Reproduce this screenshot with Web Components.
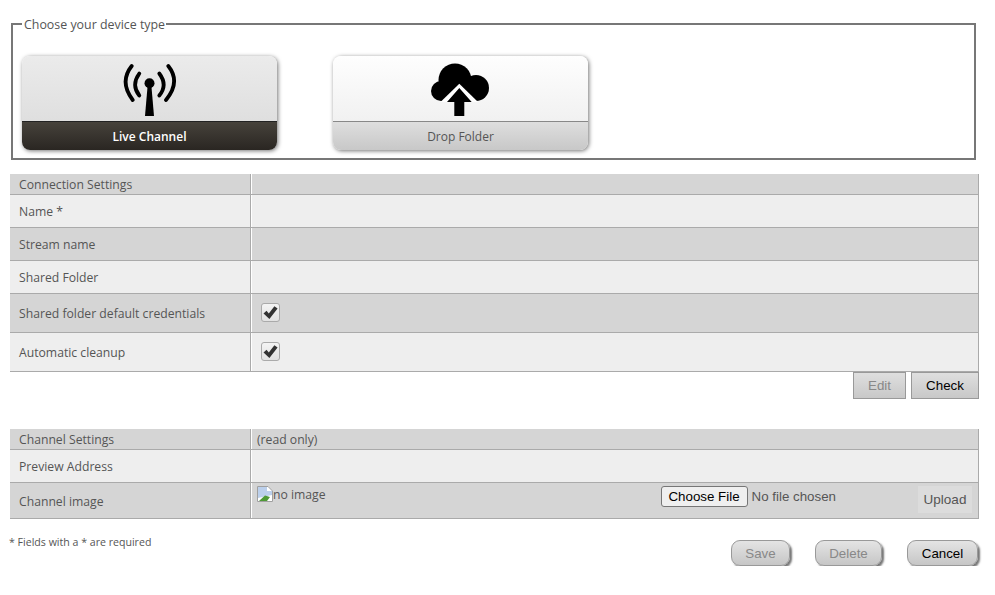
<!DOCTYPE html>
<html>
<head>
<meta charset="utf-8">
<title>Device</title>
<style>
html, body { margin: 0; background: #fff; }
body { padding: 16px 16px 0 10px; font: 12.2px "Open Sans", sans-serif; color: #555; }
</style>
</head>
<body>

<device-picker legend="Choose your device type">
    <device-tile label="Live Channel" selected>
        <svg style="margin-left:1px" width="60" height="60" viewBox="0 0 60 60" fill="none" stroke="#000" stroke-width="3.8" stroke-linecap="round">
            <path d="M11.7 5 Q-1 21 12.7 39"/>
            <path d="M48.3 5 Q61 21 46 39"/>
            <path d="M19.3 12.5 Q11 24 19.3 34.5"/>
            <path d="M39.3 12.5 Q48 24 39.3 34.5"/>
            <circle cx="29.5" cy="22.3" r="5" fill="#000" stroke="none"/>
            <path d="M27.6 25 H31.4 L34 55 H25 Z" fill="#000" stroke="none"/>
        </svg>
    </device-tile>
    <device-tile label="Drop Folder">
        <svg style="margin-left:-1px" width="70" height="60" viewBox="0 0 70 60">
            <circle cx="16" cy="30" r="10"/>
            <circle cx="30" cy="19" r="16.5"/>
            <circle cx="51" cy="27" r="13"/>
            <path d="M16 28 H51 V40 H16 Z"/>
            <path d="M34.3 22.7 L53 41 H15.5 Z" fill="#fff"/>
            <path d="M34.3 27 L46.7 41 H39.3 V55 H29.3 V41 H22 Z"/>
        </svg>
    </device-tile>
</device-picker>

<settings-table style="margin-top:14px">
    <settings-row kind="head" label="Connection Settings"></settings-row>
    <settings-row label="Name *" height="32"></settings-row>
    <settings-row kind="dark" label="Stream name" height="32"></settings-row>
    <settings-row label="Shared Folder" height="32"></settings-row>
    <settings-row kind="dark" label="Shared folder default credentials" height="38"><check-box></check-box></settings-row>
    <settings-row label="Automatic cleanup" height="38"><check-box></check-box></settings-row>
</settings-table>

<action-bar>
    <flat-button disabled>Edit</flat-button>
    <flat-button>Check</flat-button>
</action-bar>

<settings-table style="margin-top:30px">
    <settings-row kind="head" label="Channel Settings">(read only)</settings-row>
    <settings-row label="Preview Address" height="32"></settings-row>
    <settings-row kind="dark" label="Channel image" height="35" low><image-upload></image-upload></settings-row>
</settings-table>

<form-footer>
    <span slot="note">* Fields with a * are required</span>
    <round-button disabled style="width:59px">Save</round-button>
    <round-button disabled style="width:67px">Delete</round-button>
    <round-button style="width:71px">Cancel</round-button>
</form-footer>

<script>
(function() {
    /*
     * Device type picker: fieldset around the two tiles
     */
    class DevicePicker extends HTMLElement {
        constructor() {
            super();
            this.attachShadow({mode: 'open'});
            this.shadowRoot.innerHTML = `
<style>
:host { display: block; margin: 0 3px 0 1px; }
fieldset { margin: 0; padding: 24px 0 0 9px; border: 2px solid #777; height: 144px; box-sizing: border-box; display: flex; }
legend { padding: 0 1px 0 2px; height: 16px; line-height: 18px; font-size: 12.4px; color: #555; }
.tiles { display: flex; align-items: flex-start; gap: 56px; }
</style>
<fieldset>
    <legend></legend>
    <div class="tiles"><slot></slot></div>
</fieldset>`;
            this.shadowRoot.querySelector('legend').textContent = this.getAttribute('legend');
        }
    }

    class DeviceTile extends HTMLElement {
        constructor() {
            super();
            this.attachShadow({mode: 'open'});
            this.shadowRoot.innerHTML = `
<style>
:host { display: flex; flex-direction: column; width: 255px; height: 94px; border-radius: 8px; overflow: hidden; box-shadow: 1px 1px 4px rgba(0,0,0,.55); font-size: 12px; }
.top { height: 66px; flex: none; box-sizing: border-box; display: flex; align-items: flex-start; justify-content: center; padding-top: 5px; background: linear-gradient(#fefefe, #f1f1f1); border-bottom: 1px solid #888; }
.name { flex: 1; display: flex; align-items: center; justify-content: center; background: linear-gradient(#dedede, #c8c8c8); color: #555; }
:host([selected]) .top { background: linear-gradient(#ebebeb, #dfdfdf); border-bottom-color: #222; }
:host([selected]) .name { background: linear-gradient(#46423b, #2a2622); color: #fff; font-weight: 600; }
</style>
<div class="top"><slot></slot></div>
<div class="name"></div>`;
            this.shadowRoot.querySelector('.name').textContent = this.getAttribute('label');
        }
    }

    /*
     * Settings table
     */
    class SettingsTable extends HTMLElement {
        constructor() {
            super();
            this.attachShadow({mode: 'open'});
            this.shadowRoot.innerHTML = `
<style>
:host { display: flex; flex-direction: column; width: 969px; border-right: 1px solid #aaa; box-sizing: border-box; }
</style>
<slot></slot>`;
        }
    }

    class SettingsRow extends HTMLElement {
        constructor() {
            super();
            this.attachShadow({mode: 'open'});
            var h = this.getAttribute('height') || 20;
            this.shadowRoot.innerHTML = `
<style>
:host { display: grid; grid-template-columns: 241px 1fr; height: ${h}px; background: #eee; border-bottom: 1px solid #aaa; }
:host([kind="dark"]), :host([kind="head"]) { background: #d5d5d5; }
.label { display: flex; align-items: center; padding-left: 9px; border-right: 1px solid #aaa; }
:host([low]) .label { padding-top: 2px; }
.value { display: flex; align-items: center; padding-left: 5px; border-left: 1px solid #fff; min-width: 0; }
</style>
<div class="label"></div>
<div class="value"><slot></slot></div>`;
            this.shadowRoot.querySelector('.label').textContent = this.getAttribute('label');
        }
    }

    class CheckBox extends HTMLElement {
        constructor() {
            super();
            this.attachShadow({mode: 'open'});
            this.shadowRoot.innerHTML = `
<style>
:host { display: block; width: 19px; height: 19px; margin: 0 0 1px 4px; box-sizing: border-box; border: 1px solid #aaa; border-radius: 3px; background: linear-gradient(#f4f4f4, #e2e2e2); }
svg { display: block; }
</style>
<svg width="17" height="17" viewBox="0 0 17 17"><path d="M1.5 9.5 L4.5 6.8 L6.8 9.4 L12.4 2.2 L15.6 4.6 L7.4 15 Z" fill="#333"/></svg>`;
        }
    }

    class ImageUpload extends HTMLElement {
        constructor() {
            super();
            this.attachShadow({mode: 'open'});
            this.shadowRoot.innerHTML = `
<style>
:host { display: flex; position: relative; width: 100%; height: 100%; justify-content: space-between; }
.broken { display: flex; align-items: flex-start; padding-top: 3px; line-height: 18px; }
.broken svg { flex: none; }
.file { display: flex; align-items: flex-start; gap: 4px; margin-left: auto; padding-top: 3px; font: 13.33px "Liberation Sans", sans-serif; color: #555; }
.file button { width: 87px; height: 21px; padding: 0; border: 1px solid #767676; border-radius: 3px; background: #efefef; color: #000; font: 13.33px "Liberation Sans", sans-serif; }
.file span { line-height: 21px; margin-right: 142px; }
.upload { position: absolute; right: 6px; top: 3px; width: 54px; height: 27px; display: flex; align-items: center; justify-content: center; background: #dcdcdc; font: 13.5px "Liberation Sans", sans-serif; color: #555; }
</style>
<div class="broken">
    <svg width="16" height="16" viewBox="0 0 16 16"><path d="M.5 .5 H11 L15.5 5 V15.5 H.5 Z" fill="#fff" stroke="#a0a0a0"/><path d="M1 1 H10 V5 H15 V9 L1 12 Z" fill="#bcd0ec"/><path d="M2 15 L8 9.5 L13 11 L10 15 Z" fill="#4f9a37"/></svg>
    <span>no image</span>
</div>
<div class="file"><button>Choose File</button><span>No file chosen</span></div>
<div class="upload">Upload</div>`;
        }
    }

    /*
     * Buttons
     */
    class ActionBar extends HTMLElement {
        constructor() {
            super();
            this.attachShadow({mode: 'open'});
            this.shadowRoot.innerHTML = `
<style>
:host { display: flex; justify-content: flex-end; gap: 5px; width: 969px; height: 27px; }
</style>
<slot></slot>`;
        }
    }

    class FlatButton extends HTMLElement {
        constructor() {
            super();
            this.attachShadow({mode: 'open'});
            this.shadowRoot.innerHTML = `
<style>
:host { display: flex; align-items: center; justify-content: center; height: 27px; width: 53px; box-sizing: border-box; border: 1px solid #999; background: linear-gradient(#dfdfdf, #c8c8c8); font: 13.33px "Liberation Sans", sans-serif; color: #000; }
:host([disabled]) { color: #888; }
:host(:not([disabled])) { width: 68px; }
</style>
<slot></slot>`;
        }
    }

    class FormFooter extends HTMLElement {
        constructor() {
            super();
            this.attachShadow({mode: 'open'});
            this.shadowRoot.innerHTML = `
<style>
:host { display: flex; width: 968px; margin-top: 21px; font-size: 10.6px; }
.note { flex: 1; margin-left: -1px; line-height: 14px; margin-top: -5px; }
.buttons { display: flex; gap: 25px; }
</style>
<div class="note"><slot name="note"></slot></div>
<div class="buttons"><slot></slot></div>`;
        }
    }

    class RoundButton extends HTMLElement {
        constructor() {
            super();
            this.attachShadow({mode: 'open'});
            this.shadowRoot.innerHTML = `
<style>
:host { display: flex; align-items: center; justify-content: center; box-sizing: border-box; height: 26px; border: 1px solid #999; border-radius: 9px; background: linear-gradient(#e4e4e4, #c6c6c6); box-shadow: 2px 2px 2px #777; font: 13.33px "Liberation Sans", sans-serif; color: #000; }
:host([disabled]) { color: #888; }
</style>
<slot></slot>`;
        }
    }

    customElements.define('device-picker', DevicePicker);
    customElements.define('device-tile', DeviceTile);
    customElements.define('settings-table', SettingsTable);
    customElements.define('settings-row', SettingsRow);
    customElements.define('check-box', CheckBox);
    customElements.define('image-upload', ImageUpload);
    customElements.define('action-bar', ActionBar);
    customElements.define('flat-button', FlatButton);
    customElements.define('form-footer', FormFooter);
    customElements.define('round-button', RoundButton);
})();
</script>
</body>
</html>
